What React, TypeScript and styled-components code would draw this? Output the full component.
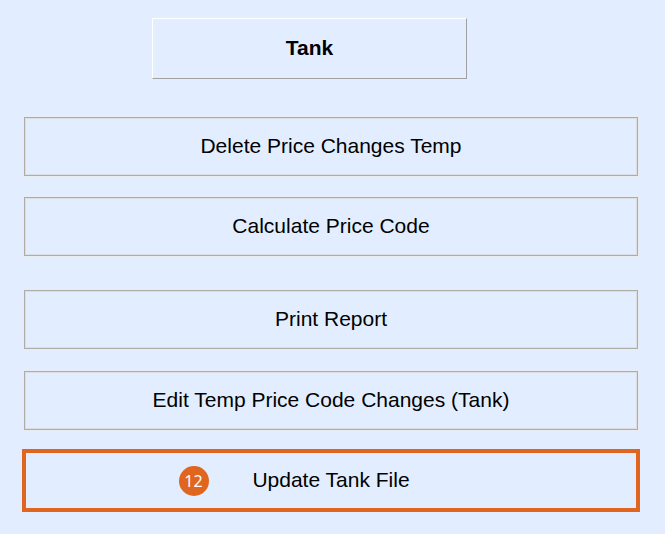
import React from 'react';
import styled, { createGlobalStyle } from 'styled-components';

const GlobalStyle = createGlobalStyle`
  * { box-sizing: border-box; }
  body { margin: 0; background: #e2eeff; font-family: "Liberation Sans", Arial, sans-serif; color: #000; }
`;

const Page = styled.main`
  display: flex;
  flex-direction: column;
  padding: 18px 27px 22px 24px;
`;

const Header = styled.header`
  display: flex;
  justify-content: center;
  padding-right: 43px;
  margin-bottom: 38px;
`;

const Title = styled.h1`
  margin: 0;
  width: 55%;
  border: 1px solid;
  border-color: #fff #a0a0a0 #a0a0a0 #fff;
  font-size: 21px;
  line-height: 24px;
  font-weight: 700;
  padding: 17px 0 18px;
  text-align: center;
`;

const Group = styled.div<{ $top?: number }>`
  display: flex;
  flex-direction: column;
  gap: 21px;
  margin-top: ${p => p.$top ?? 0}px;
`;

const Action = styled.button<{ $active?: boolean }>`
  position: relative;
  min-height: 59px;
  padding: 0 0 2px;
  border: 1px solid #b0aba5;
  box-shadow: 0 0 0 1px #e9ecf0, inset 0 0 0 1px #dbdfe5;
  background: transparent;
  color: #000;
  font-family: inherit;
  font-size: 21px;
  line-height: 24px;
  text-align: center;
  ${p => p.$active && `
    margin: -2px;
    min-height: 63px;
    border: 4px solid #e0651f;
    box-shadow: none;
  `}
`;

const Badge = styled.span`
  position: absolute;
  left: 25%;
  top: 50%;
  transform: translateY(-50%);
  width: 30px;
  height: 30px;
  border-radius: 50%;
  background: #e0651f;
  color: #fff;
  font-family: "Noto Sans", sans-serif;
  font-size: 16px;
  line-height: 30px;
`;

export default function App() {
  return (
    <>
      <GlobalStyle />
      <Page>
        <Header><Title>Tank</Title></Header>
        <Group>
          <Action>Delete Price Changes Temp</Action>
          <Action>Calculate Price Code</Action>
        </Group>
        <Group $top={34}>
          <Action>Print Report</Action>
        </Group>
        <Group $top={22}>
          <Action>Edit Temp Price Code Changes (Tank)</Action>
          <Action $active><Badge>12</Badge>Update Tank File</Action>
        </Group>
      </Page>
    </>
  );
}
